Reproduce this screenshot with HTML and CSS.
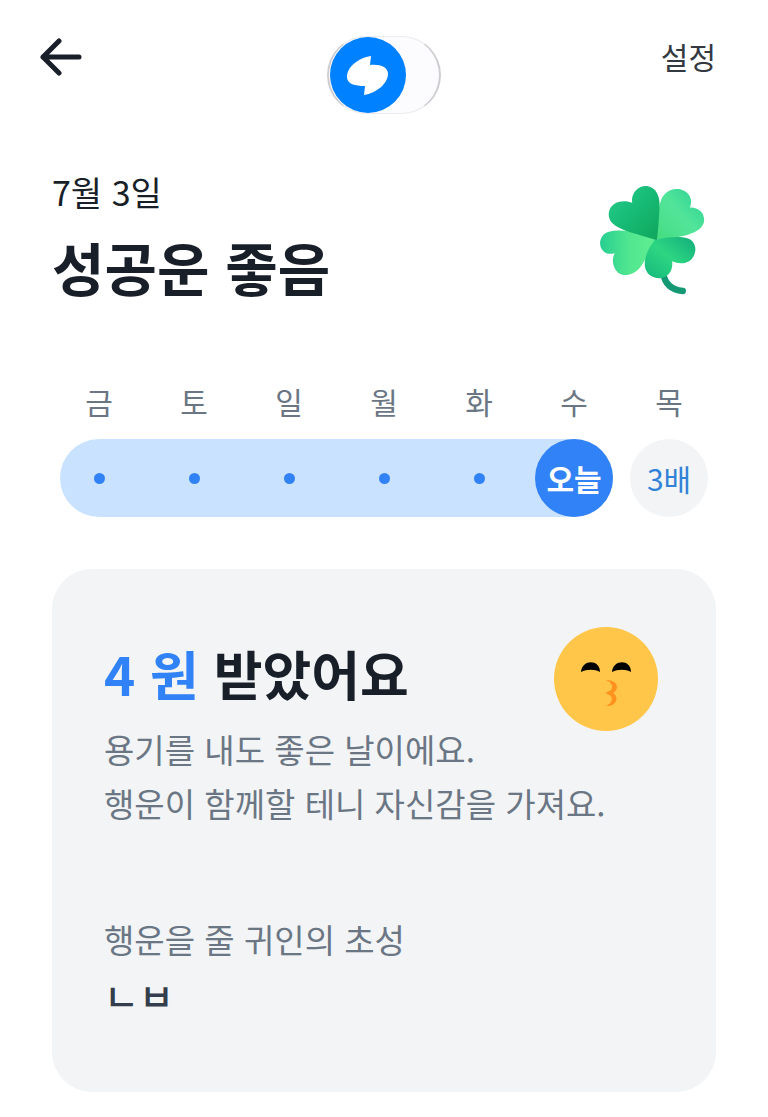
FILE: index.html
```
<!DOCTYPE html>
<html lang="ko">
  <head>
    <meta charset="UTF-8" />
    <meta name="viewport" content="width=device-width, initial-scale=1.0" />
    <title>성공운 좋음</title>
    <link rel="stylesheet" href="styles.css">
  </head>
  <body>
    <header class="topbar">
      <button class="back" type="button" aria-label="뒤로">
        <svg viewBox="0 0 42 38" width="42" height="38" fill="none" stroke="currentColor" stroke-width="5" stroke-linecap="round" stroke-linejoin="round">
          <path d="M39 19H3M19 3L3 19L19 35" />
        </svg>
      </button>
      <label class="toggle">
        <input type="checkbox" role="switch" aria-label="알림" />
        <svg viewBox="0 0 76 76" width="76" height="76">
          <circle cx="38" cy="38" r="38" fill="#0081ff" />
          <path fill="#fff" d="M41 19L40 28C50 27 58 30 58 37C58 46 47 56 34 58L35 49C25 49 17 47 17 40C17 30 28 21 41 19Z" />
        </svg>
      </label>
      <a class="settings" href="#settings">설정</a>
    </header>

    <main>
      <section class="fortune">
        <div>
          <p class="date">7월 3일</p>
          <h1>성공운 좋음</h1>
        </div>
        <svg class="clover" viewBox="58 38 320 336" width="107" height="112" aria-hidden="true">
          <defs>
            <linearGradient id="leaf-dark" x1="0" y1="0" x2="1" y2="1">
              <stop offset="0" stop-color="#27cb8c" />
              <stop offset="0.45" stop-color="#17bd77" />
              <stop offset="1" stop-color="#10a45b" />
            </linearGradient>
            <linearGradient id="leaf-right" x1="1" y1="0" x2="0" y2="1">
              <stop offset="0" stop-color="#29cf92" />
              <stop offset="0.5" stop-color="#52e59a" />
              <stop offset="1" stop-color="#45dc80" />
            </linearGradient>
            <linearGradient id="leaf-left" x1="0" y1="0" x2="1" y2="0">
              <stop offset="0" stop-color="#27ce91" />
              <stop offset="0.5" stop-color="#50e690" />
              <stop offset="1" stop-color="#61ee91" />
            </linearGradient>
            <linearGradient id="leaf-bottom" x1="1" y1="0" x2="0" y2="1">
              <stop offset="0" stop-color="#13ad7b" />
              <stop offset="0.5" stop-color="#2dd682" />
              <stop offset="1" stop-color="#16b87c" />
            </linearGradient>
          </defs>
          <path fill="none" stroke="#149974" stroke-width="19" stroke-linecap="round" d="M250 305C255 338 276 356 309 359" />
          <path fill="url(#leaf-right)" d="M231 204C233 158 233 115 243 88C252 61 277 49 301 54C329 61 341 86 330 109C352 107 374 122 373 148C369 180 325 198 231 204Z" />
          <path fill="url(#leaf-left)" d="M228 205C192 184 127 171 87 181C63 188 55 214 65 232C73 247 88 250 105 246C94 264 99 290 115 304C134 318 164 309 180 289C200 266 208 232 228 205Z" />
          <path fill="url(#leaf-bottom)" d="M225 205C259 198 298 193 323 201C346 209 352 233 342 253C331 277 302 281 277 270C280 293 269 317 245 320C221 324 198 309 195 284C193 255 206 230 225 205Z" />
          <path fill="url(#leaf-dark)" d="M231 207C174 188 119 178 97 155C80 137 85 108 104 97C122 87 141 88 157 94C153 66 174 42 202 44C230 49 241 75 239 108C237 142 236 171 231 207Z" />
        </svg>
      </section>

      <section class="week" aria-label="출석">
        <span class="day">금</span>
        <span class="day">토</span>
        <span class="day">일</span>
        <span class="day">월</span>
        <span class="day">화</span>
        <span class="day">수</span>
        <span class="day">목</span>
        <span class="streak"></span>
        <span class="mark checked"></span>
        <span class="mark checked"></span>
        <span class="mark checked"></span>
        <span class="mark checked"></span>
        <span class="mark checked"></span>
        <span class="mark today">오늘</span>
        <span class="mark bonus">3배</span>
      </section>

      <section class="card">
        <div class="card-head">
          <h2><span class="amount">4 원</span> 받았어요</h2>
          <svg class="face" viewBox="0 0 105 105" width="105" height="105" aria-hidden="true">
            <circle cx="52" cy="52" r="52" fill="#ffc649" />
            <path d="M27 45C28 32 46 32 46 45C41 42 33 42 27 45ZM58 45C59 32 77 32 77 45C72 42 64 42 58 45Z" />
            <path fill="#ff921e" d="M52 53C64 53 66 62 59 66C66 70 62 80 52 79C58 77 61 69 53 67C52 66 52 65 53 65C61 63 59 56 52 53Z" />
          </svg>
        </div>
        <p class="message">용기를 내도 좋은 날이에요.<br>행운이 함께할 테니 자신감을 가져요.</p>
        <h3>행운을 줄 귀인의 초성</h3>
        <p class="initials">ㄴㅂ</p>
      </section>
    </main>
  </body>
</html>
```
FILE: styles.css
```
* {
  margin: 0;
  padding: 0;
  box-sizing: border-box;
}
body {
  font-family: "Noto Sans CJK KR", sans-serif;
  background-color: #fff;
  color: #191f28;
}
.topbar {
  display: grid;
  grid-template-columns: 1fr auto 1fr;
  align-items: start;
  padding: 36px 40px 0;
}
.back {
  justify-self: start;
  display: flex;
  padding: 2px 0;
  border: 0;
  background: none;
  color: #191f28;
  cursor: pointer;
}
.toggle {
  display: grid;
  align-items: center;
  cursor: pointer;
}
.toggle input,
.toggle svg {
  grid-area: 1 / 1;
}
.toggle input {
  appearance: none;
  width: 114px;
  height: 78px;
  border: 1px solid #ececf0;
  border-right: 2px solid #cdcdd2;
  border-left: 2px solid #cdcdd2;
  border-radius: 39px;
  background-color: #fcfcff;
}
.toggle svg {
  margin-left: 3px;
}
.settings {
  justify-self: end;
  padding-right: 12px;
  color: #333941;
  font-size: 30px;
  line-height: 40px;
  text-decoration: none;
}
.fortune {
  display: flex;
  justify-content: space-between;
  align-items: center;
  padding: 52px 62px 0 52px;
}
.date {
  font-size: 34px;
  line-height: 52px;
}
h1 {
  font-size: 57px;
  font-weight: 700;
  line-height: 96px;
}
.week {
  display: grid;
  grid-template-columns: repeat(7, 78px);
  grid-template-rows: 48px 78px;
  row-gap: 14px;
  justify-content: space-between;
  padding: 63px 60px 52px;
}
.day {
  color: #6b7684;
  font-size: 30px;
  line-height: 48px;
  text-align: center;
}
.streak {
  grid-area: 2 / 1 / 3 / 7;
  border-radius: 39px;
  background-color: #c9e2ff;
}
.mark {
  grid-row: 2;
  display: flex;
  align-items: center;
  justify-content: center;
  border-radius: 50%;
  font-size: 30px;
}
.mark:nth-of-type(9) {
  grid-column: 1;
}
.mark:nth-of-type(10) {
  grid-column: 2;
}
.mark:nth-of-type(11) {
  grid-column: 3;
}
.mark:nth-of-type(12) {
  grid-column: 4;
}
.mark:nth-of-type(13) {
  grid-column: 5;
}
.checked::before {
  content: "";
  width: 11px;
  height: 11px;
  border-radius: 50%;
  background-color: #3182f6;
}
.today {
  grid-column: 6;
  background-color: #3182f6;
  color: #fff;
  font-weight: 700;
}
.bonus {
  grid-column: 7;
  background-color: #f2f4f6;
  color: #3182d6;
}
.card {
  margin: 0 52px 24px;
  padding: 58px 52px 68px;
  border-radius: 40px;
  background-color: #f2f4f6;
}
.card-head {
  display: flex;
  justify-content: space-between;
  padding-right: 5px;
}
.face {
  margin-bottom: -12px;
}
h2 {
  font-size: 53px;
  font-weight: 700;
  line-height: 92px;
}
.amount {
  color: #3182f6;
}
.message {
  margin-top: 2px;
  color: #6b7684;
  font-size: 33px;
  line-height: 54px;
}
h3 {
  margin-top: 82px;
  color: #6b7684;
  font-size: 33px;
  font-weight: 400;
  line-height: 54px;
}
.initials {
  color: #333d4b;
  font-size: 38px;
  font-weight: 500;
  line-height: 58px;
}
```
